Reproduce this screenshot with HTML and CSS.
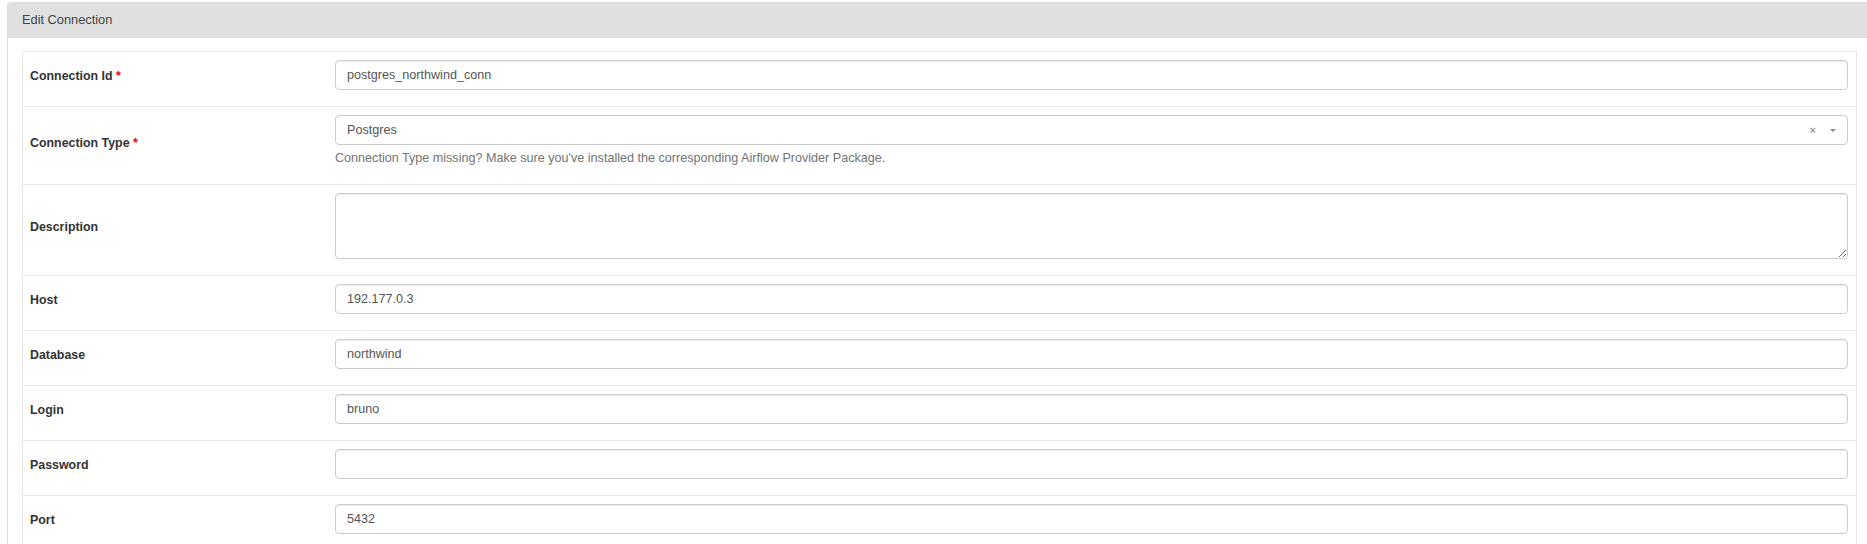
FILE: index.html
```html
<!DOCTYPE html>
<html lang="en">
<head>
<meta charset="utf-8">
<title>Edit Connection</title>
<link rel="stylesheet" href="styles.css">
</head>
<body>
<div class="panel">
  <div class="panel-heading">Edit Connection</div>
  <div class="panel-body">
    <div class="form-table">
      <div class="row">
        <div class="label-cell"><label>Connection Id <span class="req">*</span></label></div>
        <div class="value-cell"><div class="input">postgres_northwind_conn</div></div>
      </div>
      <div class="row">
        <div class="label-cell"><label>Connection Type <span class="req">*</span></label></div>
        <div class="value-cell">
          <div class="input select">
            <span class="sel-text">Postgres</span>
            <span class="sel-clear">×</span>
            <span class="sel-arrow"></span>
          </div>
          <div class="help">Connection Type missing? Make sure you've installed the corresponding Airflow Provider Package.</div>
        </div>
      </div>
      <div class="row">
        <div class="label-cell"><label>Description</label></div>
        <div class="value-cell"><textarea class="textarea"></textarea></div>
      </div>
      <div class="row">
        <div class="label-cell"><label>Host</label></div>
        <div class="value-cell"><div class="input">192.177.0.3</div></div>
      </div>
      <div class="row">
        <div class="label-cell"><label>Database</label></div>
        <div class="value-cell"><div class="input">northwind</div></div>
      </div>
      <div class="row">
        <div class="label-cell"><label>Login</label></div>
        <div class="value-cell"><div class="input">bruno</div></div>
      </div>
      <div class="row">
        <div class="label-cell"><label>Password</label></div>
        <div class="value-cell"><div class="input"></div></div>
      </div>
      <div class="row">
        <div class="label-cell"><label>Port</label></div>
        <div class="value-cell"><div class="input">5432</div></div>
      </div>
    </div>
  </div>
</div>
</body>
</html>
```

FILE: styles.css
```css
html, body {
  margin: 0;
  padding: 0;
  background: #ffffff;
  overflow: hidden;
}

body {
  font-family: "Liberation Sans", Arial, sans-serif;
  color: #333333;
}

.panel {
  margin: 2px 0 0 7px;
  width: 1865px;
  box-sizing: border-box;
  border: 1px solid #dddddd;
  border-radius: 4px;
  background: #ffffff;
  box-shadow: 0 1px 1px rgba(0, 0, 0, 0.05);
}

.panel-heading {
  height: 35px;
  line-height: 33px;
  padding: 0 14px;
  background: #e0e0e0;
  color: #444444;
  font-size: 12.8px;
  border-radius: 3px 3px 0 0;
}

.panel-body {
  padding: 13px 14px 14px 14px;
}

.form-table {
  border: 1px solid #e8e8e8;
  border-top: 0;
}

.row {
  display: grid;
  grid-template-columns: 304px 1fr;
  border-top: 1px solid #e8e8e8;
}

.label-cell {
  padding: 8px 7px;
  display: flex;
  align-items: center;
}

.label-cell label {
  font-size: 12.4px;
  font-weight: bold;
  color: #333333;
  margin-bottom: 5px;
  line-height: 17px;
}

.req {
  color: #ee0000;
  font-weight: bold;
}

.value-cell {
  padding: 8px 8px 8px 8px;
}

.input {
  box-sizing: border-box;
  height: 30px;
  border: 1px solid #cccccc;
  border-radius: 4px;
  padding: 0 11px;
  font-size: 12.6px;
  line-height: 28px;
  color: #555555;
  margin-bottom: 8px;
  box-shadow: inset 0 1px 1px rgba(0, 0, 0, 0.075);
}

.select {
  display: flex;
  align-items: center;
  margin-bottom: 0;
  padding-right: 0;
  box-shadow: none;
}

.sel-text {
  flex: 1;
}

.sel-clear {
  color: #999999;
  font-weight: bold;
  font-size: 11px;
  line-height: 11px;
  margin-right: 14px;
}

.sel-arrow {
  width: 0;
  height: 0;
  border-left: 3px solid transparent;
  border-right: 3px solid transparent;
  border-top: 3px solid #888888;
  margin-right: 11px;
}

.help {
  margin: 5px 0 9px 0;
  line-height: 17px;
  font-size: 12.6px;
  color: #737373;
}

.textarea {
  display: block;
  box-sizing: border-box;
  width: 100%;
  height: 66px;
  margin: 0 0 8px 0;
  border: 1px solid #cccccc;
  border-radius: 4px;
  padding: 5px 11px;
  font-family: "Liberation Sans", Arial, sans-serif;
  font-size: 12.6px;
  color: #555555;
  box-shadow: inset 0 1px 1px rgba(0, 0, 0, 0.075);
  resize: vertical;
}
```
